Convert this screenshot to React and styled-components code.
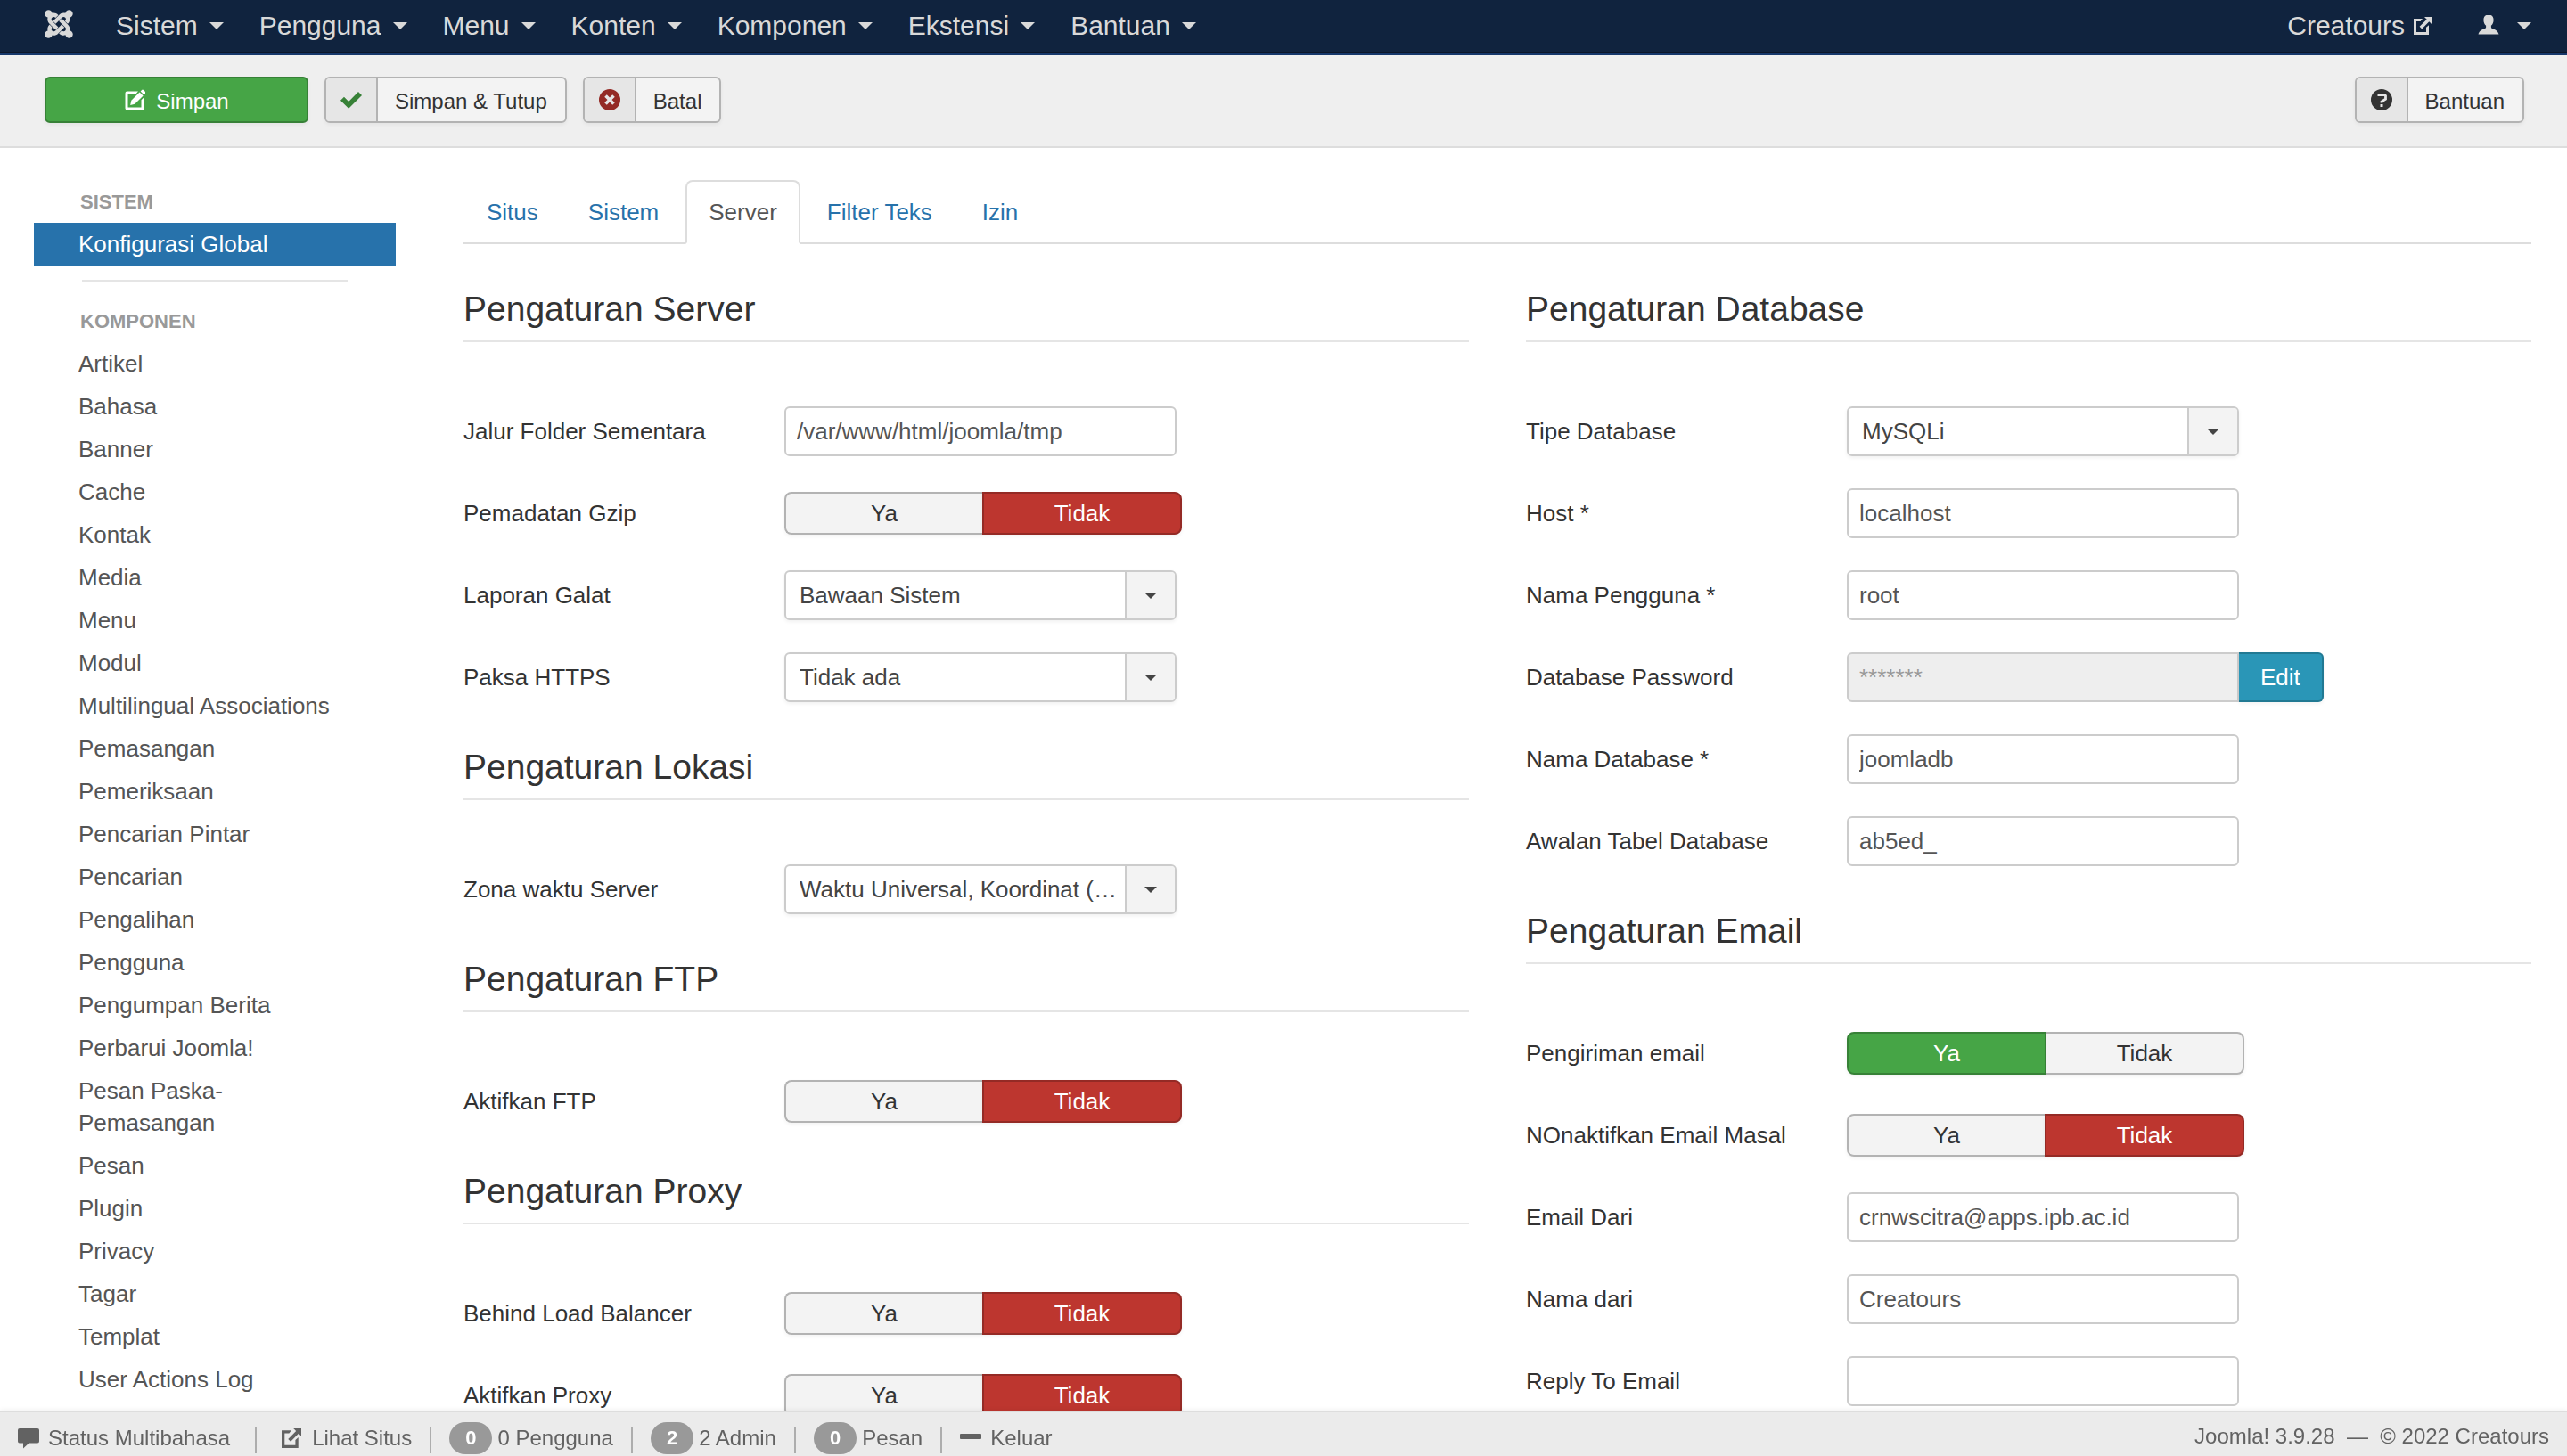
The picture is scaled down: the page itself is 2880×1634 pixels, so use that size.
import React, { useId } from "react";
import styled, { createGlobalStyle, css } from "styled-components";
import { FaJoomla } from "react-icons/fa";

const GlobalStyle = createGlobalStyle`
  *, *::before, *::after { box-sizing: border-box; }
  body {
    margin: 0;
    background: #fff;
    color: #333;
    font-family: "Liberation Sans", Arial, sans-serif;
    font-size: 26px;
    line-height: 36px;
  }
  a { text-decoration: none; }
  button, input, select { font: inherit; margin: 0; }
`;

/* ---------- icons ---------- */

const Icon = styled.svg`
  display: block;
  flex: none;
  width: ${(p) => p.$size || 24}px;
  height: ${(p) => p.$size || 24}px;
  fill: currentColor;
`;

const ExternalIcon = ({ size }) => (
  <Icon $size={size} viewBox="0 0 20 20" aria-hidden="true">
    <path d="M0 2h10l-2.4 3H3v12h11v-5.2l3-2.600V20H0z" />
    <path d="M12 0h8v8l-2.700-2.700-8.100 8.100-2.600-2.600 8.100-8.100z" />
  </Icon>
);

const EditIcon = () => (
  <Icon viewBox="0 0 24 24" aria-hidden="true">
    <path d="M3.500 2.500H16L13.300 5.500H4.500v15h15v-8.300l3-3V21.500a2 2 0 0 1-2 2h-17a2 2 0 0 1-2-2v-17a2 2 0 0 1 2-2z" />
    <path d="M17.600 3.400l4 4-9.400 9.400-5 1.200 1.100-5.200z" />
    <path d="M18.600 2.400l1.500-1.500a1.200 1.200 0 0 1 1.800 0l2.200 2.200a1.200 1.200 0 0 1 0 1.800l-1.500 1.500z" />
  </Icon>
);

const CheckIcon = () => (
  <Icon viewBox="0 0 24 24" aria-hidden="true">
    <path d="M0 12.800l4-4 5.200 5.200L20 3l4 4L9.200 21.800z" />
  </Icon>
);

const CancelIcon = () => (
  <Icon viewBox="0 0 24 24" aria-hidden="true">
    <circle cx="12" cy="12" r="12" />
    <path d="M7.500 7.500l9 9M16.500 7.500l-9 9" stroke="#e6e6e6" strokeWidth="3.600" />
  </Icon>
);

const HelpIcon = () => (
  <Icon viewBox="0 0 24 24" aria-hidden="true">
    <circle cx="12" cy="12" r="12" />
    <path d="M7.500 6.500h8l1 1v3.800l-4.500 2.700v1.500" fill="none" stroke="#e6e6e6" strokeWidth="2.800" />
    <path d="M10.500 17h3v3h-3z" fill="#e6e6e6" />
  </Icon>
);

const UserIcon = () => (
  <Icon viewBox="0 2 24 24" aria-hidden="true">
    <path d="M12 1.500c3.600 0 5.600 2.300 5.600 5.900 0 2.700-1.200 5-2.700 6.400v1.600c0 .8.5 1.200 1.300 1.500 3.200 1 6.300 2.500 7.300 6.600H.5c1-4.100 4.100-5.600 7.300-6.600.8-.3 1.300-.7 1.300-1.500v-1.600C7.600 12.400 6.400 10.100 6.400 7.400c0-3.600 2-5.900 5.600-5.900z" />
  </Icon>
);

const CommentIcon = () => (
  <Icon viewBox="0 0 24 24" aria-hidden="true">
    <path d="M2 1h20a2 2 0 0 1 2 2v12.500a2 2 0 0 1-2 2H12.500L6 23.500v-6H2a2 2 0 0 1-2-2V3a2 2 0 0 1 2-2z" />
  </Icon>
);

const MinusIcon = () => (
  <Icon viewBox="0 0 24 24" aria-hidden="true">
    <rect x="0" y="7" width="24" height="6" rx="1" />
  </Icon>
);

const Caret = styled.span`
  border: ${(p) => p.$size || 8}px solid transparent;
  border-top-color: currentColor;
  border-bottom: 0;
`;

/* ---------- top bar ---------- */

const Navbar = styled.nav`
  display: flex;
  align-items: center;
  height: 62px;
  padding: 0 40px 0 50px;
  background: #10233e;
  border-bottom: 2px solid #16386b;
  box-shadow: inset 0 -2px 0 #0c172a;
  color: #d9d9d9;
  font-size: 30px;
`;

const Brand = styled.a`
  display: flex;
  justify-content: center;
  width: 32px;
  margin-right: 28px;
  padding-bottom: 6px;
  color: inherit;
  font-size: 36px;
`;

const NavItem = styled.a`
  display: flex;
  align-items: center;
  gap: ${(p) => p.$gap || 13}px;
  padding: 0 20px 2px;
  color: inherit;
`;

const NavEnd = styled.div`
  display: flex;
  align-items: center;
  gap: 12px;
  margin-left: auto;
  margin-right: -20px;
`;

/* ---------- toolbar ---------- */

const Subhead = styled.div`
  display: flex;
  gap: 18px;
  padding: 24px 48px 26px 50px;
  background: #efefef;
  border-bottom: 2px solid #ddd;
`;

const ToolButton = styled.button`
  display: flex;
  align-items: stretch;
  height: 52px;
  padding: 0;
  overflow: hidden;
  background: #f3f3f3;
  border: 2px solid #b3b3b3;
  border-radius: 6px;
  box-shadow: 0 2px 4px rgba(0, 0, 0, 0.05);
  color: #333;
  font-size: 24px;
  line-height: 36px;
  ${(p) => p.$end && css`margin-left: auto;`}
  ${(p) =>
    p.$primary &&
    css`
      align-items: center;
      justify-content: center;
      gap: 12px;
      width: 296px;
      background: #46a546;
      border-color: #378137;
      color: #fff;
    `}
`;

const ToolIcon = styled.span`
  display: flex;
  align-items: center;
  justify-content: center;
  width: 58px;
  background: #e6e6e6;
  border-right: 2px solid #b3b3b3;
  color: ${(p) => p.$color || "#333"};
`;

const ToolText = styled.span`
  align-self: center;
  padding: 4px 20px 0 19px;
`;

const PrimaryText = styled.span`
  padding-top: 4px;
`;

/* ---------- body ---------- */

const Body = styled.div`
  display: grid;
  grid-template-columns: 406px minmax(0, 1fr);
  gap: 76px;
  padding: 36px 40px 0 38px;
`;

const Sidebar = styled.ul`
  list-style: none;
  margin: 0;
  padding: 0;
`;

const SideHeader = styled.li`
  padding: 7px 52px 5px;
  color: #999;
  font-size: 22px;
  font-weight: bold;
  text-transform: uppercase;
`;

const SideDivider = styled.li`
  height: 2px;
  margin: 16px 54px 20px;
  background: #e5e5e5;
`;

const SideLink = styled.a`
  display: block;
  padding: 6px 54px 6px 50px;
  color: ${(p) => (p.$active ? "#fff" : "#555")};
  background: ${(p) => (p.$active ? "#2772ab" : "transparent")};
`;

const Tabs = styled.div`
  display: flex;
  gap: 4px;
  margin-bottom: 36px;
  box-shadow: inset 0 -2px 0 #ddd;
`;

const Tab = styled.a`
  padding: 16px 24px;
  border: 2px solid transparent;
  border-radius: 8px 8px 0 0;
  color: #2772ab;
  ${(p) =>
    p.$active &&
    css`
      background: #fff;
      border-color: #ddd #ddd #fff;
      color: #555;
    `}
`;

const Columns = styled.div`
  display: grid;
  grid-template-columns: repeat(2, minmax(0, 1fr));
  gap: 64px;
`;

const Column = styled.div`
  display: flex;
  flex-direction: column;
  gap: 36px;
`;

const Section = styled.section`
  display: flex;
  flex-direction: column;
  gap: 36px;
`;

const SectionTitle = styled.h3`
  margin: 0 0 36px;
  padding-top: 2px;
  border-bottom: 2px solid #e5e5e5;
  font-size: 39px;
  font-weight: normal;
  line-height: 70px;
`;

const Row = styled.div`
  display: grid;
  grid-template-columns: 360px minmax(0, 1fr);
  align-items: center;
  min-height: 56px;
`;

const TextBox = styled.input`
  width: 440px;
  height: 56px;
  padding: 0 12px;
  background: #fff;
  border: 2px solid #ccc;
  border-radius: 6px;
  color: #555;
  &:disabled {
    background: #eee;
    border-radius: 6px 0 0 6px;
  }
  &::placeholder { color: #999; opacity: 1; }
`;

const InputGroup = styled.div`
  display: flex;
`;

const EditButton = styled.button`
  height: 56px;
  padding: 0 24px;
  background: #2a96b7;
  border: 2px solid #217993;
  border-left: 0;
  border-radius: 0 6px 6px 0;
  box-shadow: 0 2px 4px rgba(0, 0, 0, 0.05);
  color: #fff;
`;

const SelectWrap = styled.div`
  display: grid;
  grid-template-columns: minmax(0, 1fr) 56px;
  width: 440px;
  height: 56px;
  overflow: hidden;
  border: 2px solid #ccc;
  border-radius: 6px;
  background: #fff;
  box-shadow: 0 2px 4px rgba(0, 0, 0, 0.06);
`;

const SelectBox = styled.select`
  grid-area: 1 / 1 / 2 / 3;
  appearance: none;
  min-width: 0;
  padding: 0 60px 0 15px;
  background: transparent;
  border: 0;
  color: #444;
  overflow: hidden;
  text-overflow: ellipsis;
  white-space: nowrap;
`;

const SelectArrow = styled.span`
  grid-area: 1 / 2 / 2 / 3;
  display: flex;
  align-items: center;
  justify-content: center;
  background: #f3f3f3;
  border-left: 2px solid #ccc;
  color: #444;
  pointer-events: none;
`;

const ToggleGroup = styled.div`
  display: flex;
`;

const tones = {
  off: ["#f3f3f3", "#b3b3b3", "#333"],
  yes: ["#46a546", "#378137", "#fff"],
  no: ["#bd362f", "#942a25", "#fff"],
};

const ToggleOption = styled.label`
  display: flex;
  align-items: center;
  justify-content: center;
  width: ${(p) => (p.$tone === "off" ? 222 : 224)}px;
  height: 48px;
  background: ${(p) => tones[p.$tone][0]};
  border: 2px solid ${(p) => tones[p.$tone][1]};
  color: ${(p) => tones[p.$tone][2]};
  box-shadow: 0 2px 4px rgba(0, 0, 0, 0.05);
  &:first-child {
    border-radius: 8px 0 0 8px;
    ${(p) => p.$tone === "off" && "border-right: 0;"}
  }
  &:last-child {
    border-radius: 0 8px 8px 0;
    ${(p) => p.$tone === "off" && "border-left: 0;"}
  }
`;

const ToggleInput = styled.input`
  appearance: none;
  width: 0;
  height: 0;
`;

/* ---------- status bar ---------- */

const StatusBar = styled.footer`
  position: fixed;
  left: 0;
  right: 0;
  bottom: 0;
  display: flex;
  align-items: flex-start;
  justify-content: space-between;
  padding: 11px 20px 2px 0;
  background: #ebebeb;
  border-top: 2px solid #ddd;
  box-shadow: 0 0 6px rgba(0, 0, 0, 0.08);
  color: #626262;
  font-size: 24px;
`;

const StatusGroup = styled.div`
  display: flex;
  align-items: center;
`;

const StatusLink = styled.a`
  display: flex;
  align-items: center;
  gap: ${(p) => p.$gap || 12}px;
  padding: 0 20px;
  color: inherit;
`;

const Divider = styled.span`
  width: 2px;
  height: 30px;
  margin: 4px ${(p) => (p.$wide ? 8 : 0)}px 0;
  background: #adadad;
`;

const Badge = styled.span`
  padding: 0 18px;
  background: #999;
  border-radius: 18px;
  color: #fff;
  font-size: 22px;
  font-weight: bold;
`;

const Version = styled.div`
  line-height: 32px;
`;

/* ---------- field helpers ---------- */

function TextField({ label, value }) {
  const id = useId();
  return (
    <Row>
      <label htmlFor={id}>{label}</label>
      <TextBox id={id} type="text" defaultValue={value} />
    </Row>
  );
}

function SelectField({ label, value }) {
  const id = useId();
  return (
    <Row>
      <label htmlFor={id}>{label}</label>
      <SelectWrap>
        <SelectBox id={id} defaultValue={value}>
          <option>{value}</option>
        </SelectBox>
        <SelectArrow>
          <Caret $size={7} />
        </SelectArrow>
      </SelectWrap>
    </Row>
  );
}

function ToggleField({ label, on = false }) {
  const id = useId();
  return (
    <Row>
      <span id={id}>{label}</span>
      <ToggleGroup role="radiogroup" aria-labelledby={id}>
        <ToggleOption $tone={on ? "yes" : "off"}>
          <ToggleInput type="radio" name={id} defaultChecked={on} />
          Ya
        </ToggleOption>
        <ToggleOption $tone={on ? "off" : "no"}>
          <ToggleInput type="radio" name={id} defaultChecked={!on} />
          Tidak
        </ToggleOption>
      </ToggleGroup>
    </Row>
  );
}

function PasswordField({ label }) {
  const id = useId();
  return (
    <Row>
      <label htmlFor={id}>{label}</label>
      <InputGroup>
        <TextBox id={id} type="password" placeholder="*******" disabled />
        <EditButton type="button">Edit</EditButton>
      </InputGroup>
    </Row>
  );
}

const menus = ["Sistem", "Pengguna", "Menu", "Konten", "Komponen", "Ekstensi", "Bantuan"];

const components = [
  "Artikel", "Bahasa", "Banner", "Cache", "Kontak", "Media", "Menu", "Modul",
  "Multilingual Associations", "Pemasangan", "Pemeriksaan", "Pencarian Pintar",
  "Pencarian", "Pengalihan", "Pengguna", "Pengumpan Berita", "Perbarui Joomla!",
  "Pesan Paska-Pemasangan", "Pesan", "Plugin", "Privacy", "Tagar", "Templat",
  "User Actions Log",
];

const tabs = ["Situs", "Sistem", "Server", "Filter Teks", "Izin"];

export default function App() {
  return (
    <>
      <GlobalStyle />
      <Navbar>
        <Brand href="#" aria-label="Joomla">
          <FaJoomla />
        </Brand>
        {menus.map((name) => (
          <NavItem href="#" key={name}>
            {name}
            <Caret />
          </NavItem>
        ))}
        <NavEnd>
          <NavItem href="#" $gap={10}>
            Creatours
            <ExternalIcon size={20} />
          </NavItem>
          <NavItem href="#" $gap={20} aria-label="Akun">
            <UserIcon />
            <Caret />
          </NavItem>
        </NavEnd>
      </Navbar>

      <Subhead>
        <ToolButton type="button" $primary>
          <EditIcon />
          <PrimaryText>Simpan</PrimaryText>
        </ToolButton>
        <ToolButton type="button">
          <ToolIcon $color="#378137"><CheckIcon /></ToolIcon>
          <ToolText>Simpan &amp; Tutup</ToolText>
        </ToolButton>
        <ToolButton type="button">
          <ToolIcon $color="#942a25"><CancelIcon /></ToolIcon>
          <ToolText>Batal</ToolText>
        </ToolButton>
        <ToolButton type="button" $end>
          <ToolIcon><HelpIcon /></ToolIcon>
          <ToolText>Bantuan</ToolText>
        </ToolButton>
      </Subhead>

      <Body>
        <Sidebar>
          <SideHeader>Sistem</SideHeader>
          <li><SideLink href="#" $active>Konfigurasi Global</SideLink></li>
          <SideDivider />
          <SideHeader>Komponen</SideHeader>
          {components.map((name) => (
            <li key={name}><SideLink href="#">{name}</SideLink></li>
          ))}
        </Sidebar>

        <main>
          <Tabs>
            {tabs.map((name) => (
              <Tab href="#" key={name} $active={name === "Server"}>{name}</Tab>
            ))}
          </Tabs>
          <Columns>
            <Column>
              <Section>
                <SectionTitle>Pengaturan Server</SectionTitle>
                <TextField label="Jalur Folder Sementara" value="/var/www/html/joomla/tmp" />
                <ToggleField label="Pemadatan Gzip" />
                <SelectField label="Laporan Galat" value="Bawaan Sistem" />
                <SelectField label="Paksa HTTPS" value="Tidak ada" />
              </Section>
              <Section>
                <SectionTitle>Pengaturan Lokasi</SectionTitle>
                <SelectField label="Zona waktu Server" value="Waktu Universal, Koordinat (UTC)" />
              </Section>
              <Section>
                <SectionTitle>Pengaturan FTP</SectionTitle>
                <ToggleField label="Aktifkan FTP" />
              </Section>
              <Section>
                <SectionTitle>Pengaturan Proxy</SectionTitle>
                <ToggleField label="Behind Load Balancer" />
                <ToggleField label="Aktifkan Proxy" />
              </Section>
            </Column>
            <Column>
              <Section>
                <SectionTitle>Pengaturan Database</SectionTitle>
                <SelectField label="Tipe Database" value="MySQLi" />
                <TextField label="Host *" value="localhost" />
                <TextField label="Nama Pengguna *" value="root" />
                <PasswordField label="Database Password" />
                <TextField label="Nama Database *" value="joomladb" />
                <TextField label="Awalan Tabel Database" value="ab5ed_" />
              </Section>
              <Section>
                <SectionTitle>Pengaturan Email</SectionTitle>
                <ToggleField label="Pengiriman email" on />
                <ToggleField label="NOnaktifkan Email Masal" />
                <TextField label="Email Dari" value="crnwscitra@apps.ipb.ac.id" />
                <TextField label="Nama dari" value="Creatours" />
                <TextField label="Reply To Email" value="" />
              </Section>
            </Column>
          </Columns>
        </main>
      </Body>

      <StatusBar>
        <StatusGroup>
          <StatusLink href="#" $gap={10}><CommentIcon />Status Multibahasa</StatusLink>
          <Divider $wide />
          <StatusLink href="#"><ExternalIcon size={22} />Lihat Situs</StatusLink>
          <Divider />
          <StatusLink href="#" $gap={6}><Badge>0</Badge>0 Pengguna</StatusLink>
          <Divider />
          <StatusLink href="#" $gap={6}><Badge>2</Badge>2 Admin</StatusLink>
          <Divider />
          <StatusLink href="#" $gap={6}><Badge>0</Badge>Pesan</StatusLink>
          <Divider />
          <StatusLink href="#" $gap={10}><MinusIcon />Keluar</StatusLink>
        </StatusGroup>
        <Version>Joomla! 3.9.28 &nbsp;—&nbsp; © 2022 Creatours</Version>
      </StatusBar>
    </>
  );
}
